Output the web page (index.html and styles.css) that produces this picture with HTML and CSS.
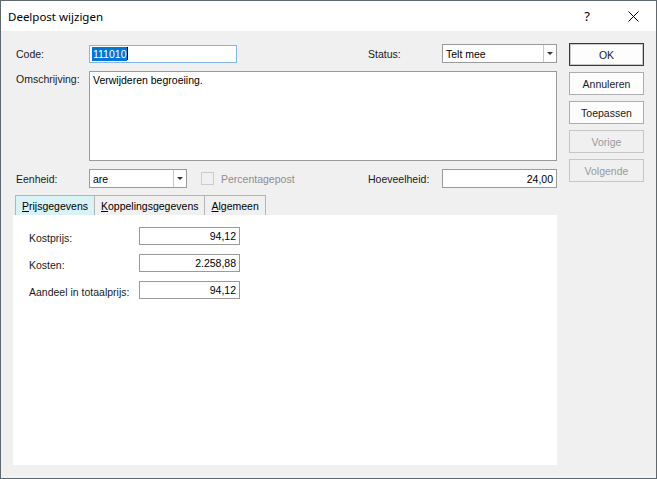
FILE: index.html
```html
<!DOCTYPE html>
<html>
<head>
<meta charset="utf-8">
<link rel="stylesheet" href="styles.css">
</head>
<body>
<div class="window">
  <div class="titlebar">
    <span class="title">Deelpost wijzigen</span>
    <span class="capbtn help">?</span>
    <span class="capbtn close"><svg width="11" height="11" viewBox="0 0 11 11"><path d="M0.5 0.5L10.5 10.5M10.5 0.5L0.5 10.5" stroke="#000" stroke-width="1" fill="none"/></svg></span>
  </div>
  <div class="body">
    <div class="main">
      <div class="row">
        <span class="lbl">Code:</span>
        <div class="textbox code"><span class="sel">111010</span><span class="caret"></span></div>
        <div class="right">
          <span class="rlbl">Status:</span>
          <div class="combo status"><span class="val">Telt mee</span><span class="arrow"><span class="tri"></span></span></div>
        </div>
      </div>
      <div class="row row-desc">
        <span class="lbl lbl-top">Omschrijving:</span>
        <div class="memo">Verwijderen begroeiing.</div>
      </div>
      <div class="row row-unit">
        <span class="lbl">Eenheid:</span>
        <div class="combo unit"><span class="val">are</span><span class="arrow"><span class="tri"></span></span></div>
        <span class="check"></span>
        <span class="check-lbl">Percentagepost</span>
        <div class="right">
          <span class="rlbl">Hoeveelheid:</span>
          <div class="textbox num qty">24,00</div>
        </div>
      </div>
      <div class="tabs">
        <span class="tab active"><u>P</u>rijsgegevens</span>
        <span class="tab"><u>K</u>oppelingsgegevens</span>
        <span class="tab"><u>A</u>lgemeen</span>
      </div>
      <div class="panel">
        <div class="prow"><span class="plbl">Kostprijs:</span><div class="textbox num pfield">94,12</div></div>
        <div class="prow"><span class="plbl">Kosten:</span><div class="textbox num pfield">2.258,88</div></div>
        <div class="prow"><span class="plbl">Aandeel in totaalprijs:</span><div class="textbox num pfield">94,12</div></div>
      </div>
    </div>
    <div class="buttons">
      <div class="btn default">OK</div>
      <div class="btn">Annuleren</div>
      <div class="btn">Toepassen</div>
      <div class="btn disabled">Vorige</div>
      <div class="btn disabled">Volgende</div>
    </div>
  </div>
</div>
</body>
</html>
```

FILE: styles.css
```css
html, body {
  margin: 0;
  padding: 0;
  background: #f0f0f0;
}

.window {
  width: 657px;
  height: 479px;
  box-sizing: border-box;
  border: 1px solid #5f686e;
  background: #f0f0f0;
  display: flex;
  flex-direction: column;
  font-family: "Liberation Sans", Arial, sans-serif;
  font-size: 10.5px;
  color: #000;
}

.titlebar {
  height: 30px;
  flex: none;
  background: #fff;
  display: flex;
  align-items: center;
}

.title {
  margin-left: 7px;
  font-family: "Noto Sans", "Open Sans", sans-serif;
  font-size: 11.5px;
  color: #000;
  flex: 1;
}

.capbtn {
  width: 46px;
  height: 30px;
  display: flex;
  align-items: center;
  justify-content: center;
  font-family: "Noto Sans", sans-serif;
  font-size: 13px;
}

.body {
  flex: 1;
  display: flex;
  padding-top: 12px;
}

.main {
  width: 544px;
  margin-left: 12px;
  display: flex;
  flex-direction: column;
  padding-top: 1px;
}

.row {
  display: flex;
  align-items: center;
  padding-left: 3px;
  height: 19px;
}

.lbl {
  width: 73px;
  flex: none;
  color: #1a1a1a;
}

.lbl-top {
  align-self: flex-start;
  padding-top: 2px;
}

.right {
  margin-left: auto;
  display: flex;
  align-items: center;
}

.rlbl {
  width: 74px;
  color: #1a1a1a;
}

.textbox {
  box-sizing: border-box;
  height: 18px;
  border: 1px solid #9a9a9a;
  background: #fff;
  line-height: 16px;
  padding: 0 2px;
  white-space: nowrap;
  display: flex;
  align-items: center;
}

.num {
  justify-content: flex-end;
}

.code {
  width: 148px;
  border-color: #86b6e8;
}

.sel {
  background: #0078d7;
  color: #fff;
  padding: 0 1px;
  line-height: 14px;
}

.caret {
  width: 1px;
  height: 13px;
  background: #000;
}

.combo {
  box-sizing: border-box;
  height: 19px;
  border: 1px solid #9a9a9a;
  background: #fff;
  display: flex;
  align-items: stretch;
}

.combo .val {
  flex: 1;
  padding-left: 3px;
  display: flex;
  align-items: center;
}

.combo .arrow {
  width: 12px;
  border-left: 1px solid #c8c8c8;
  display: flex;
  align-items: center;
  justify-content: center;
}

.tri {
  width: 0;
  height: 0;
  border-left: 3px solid transparent;
  border-right: 3px solid transparent;
  border-top: 3px solid #333;
}

.status {
  width: 115px;
}

.unit {
  width: 98px;
}

.qty {
  width: 115px;
  height: 19px;
  padding-right: 3px;
}

.row-desc {
  margin-top: 8px;
  height: 90px;
  align-items: flex-start;
}

.memo {
  box-sizing: border-box;
  width: 468px;
  height: 90px;
  border: 1px solid #9a9a9a;
  background: #fff;
  padding: 1px 3px;
  line-height: 14px;
}

.row-unit {
  margin-top: 8px;
}

.check {
  width: 13px;
  height: 13px;
  box-sizing: border-box;
  border: 1px solid #cccccc;
  background: #f0f0f0;
  margin-left: 14px;
}

.check-lbl {
  margin-left: 7px;
  color: #8d8d8d;
}

.tabs {
  margin-top: 7px;
  margin-left: 2px;
  display: flex;
  height: 20px;
}

.tab {
  box-sizing: border-box;
  height: 20px;
  border: 1px solid #b4b4b4;
  border-bottom: none;
  padding: 0 6px;
  display: flex;
  align-items: center;
  color: #000;
  background: #f0f0f0;
}

.tab + .tab {
  border-left: none;
}

.tab.active {
  background: #d8f2f5;
}

.tab u {
  text-decoration-thickness: 1px;
  text-underline-offset: 1px;
}

.panel {
  height: 250px;
  background: #fff;
  padding: 12px 0 0 16px;
  box-sizing: border-box;
  display: flex;
  flex-direction: column;
  gap: 9px;
}

.prow {
  display: flex;
  align-items: center;
  height: 18px;
}

.plbl {
  width: 110px;
  color: #1a1a1a;
  padding-top: 3px;
}

.pfield {
  width: 101px;
  padding-right: 3px;
}

.buttons {
  margin-left: 12px;
  width: 75px;
  display: flex;
  flex-direction: column;
  gap: 6px;
}

.btn {
  box-sizing: border-box;
  height: 23px;
  border: 1px solid #adadad;
  background: #fdfdfd;
  display: flex;
  align-items: center;
  justify-content: center;
  color: #1a1a1a;
}

.btn.default {
  border: 1px solid #3a3a3a;
  box-shadow: inset 0 0 0 1px #c8c8c8;
}

.btn.disabled {
  background: #f0f0f0;
  border-color: #c6c6c6;
  color: #9a9a9a;
}
```
